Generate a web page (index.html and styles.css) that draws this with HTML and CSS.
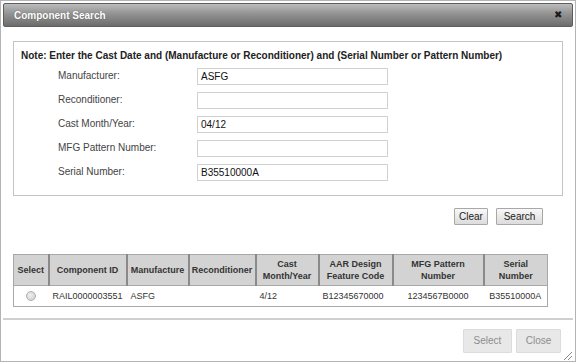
FILE: index.html
```html
<!DOCTYPE html>
<html>
<head>
<meta charset="utf-8">
<link rel="stylesheet" href="styles.css">
</head>
<body>
<div class="dialog">
  <div class="titlebar">
    <span class="title">Component Search</span>
    <span class="close">&#x2716;</span>
  </div>
  <div class="content">
    <div class="criteria">
      <div class="note">Note: Enter the Cast Date and (Manufacture or Reconditioner) and (Serial Number or Pattern Number)</div>
      <div class="form">
        <label class="lbl">Manufacturer:</label><div class="inp">ASFG</div>
        <label class="lbl">Reconditioner:</label><div class="inp"></div>
        <label class="lbl">Cast Month/Year:</label><div class="inp">04/12</div>
        <label class="lbl">MFG Pattern Number:</label><div class="inp"></div>
        <label class="lbl">Serial Number:</label><div class="inp">B35510000A</div>
      </div>
    </div>
    <div class="actions">
      <button class="btn btn-clear">Clear</button>
      <button class="btn btn-search">Search</button>
    </div>
    <table class="results">
      <colgroup>
        <col class="c1"><col class="c2"><col class="c3"><col class="c4"><col class="c5"><col class="c6"><col class="c7"><col class="c8">
      </colgroup>
      <thead>
        <tr>
          <th>Select</th>
          <th>Component ID</th>
          <th>Manufacture</th>
          <th>Reconditioner</th>
          <th>Cast<br>Month/Year</th>
          <th>AAR Design<br>Feature Code</th>
          <th>MFG Pattern<br>Number</th>
          <th>Serial<br>Number</th>
        </tr>
      </thead>
      <tbody>
        <tr>
          <td class="center"><span class="radio"></span></td>
          <td>RAIL0000003551</td>
          <td>ASFG</td>
          <td></td>
          <td>4/12</td>
          <td>B12345670000</td>
          <td class="center">1234567B0000</td>
          <td class="center">B35510000A</td>
        </tr>
      </tbody>
    </table>
  </div>
  <div class="footer">
    <button class="fbtn fbtn-select">Select</button>
    <button class="fbtn fbtn-close">Close</button>
    <span class="grip"></span>
  </div>
</div>
</body>
</html>
```
FILE: styles.css
```css
html, body {
  margin: 0;
  padding: 0;
  background: #fff;
}
body {
  font-family: Arial, "Liberation Sans", sans-serif;
  font-size: 10px;
  color: #333;
}
.dialog {
  width: 576px;
  height: 362px;
  box-sizing: border-box;
  border: 1px solid #b4b4b4;
  padding: 2px 2px 0 2px;
  display: flex;
  flex-direction: column;
  position: relative;
}
.titlebar {
  height: 24px;
  box-sizing: border-box;
  border: 1px solid #5e5e5e;
  border-radius: 2px;
  background: linear-gradient(#bcbcbc 0%, #929292 45%, #6c6c6c 100%);
  display: flex;
  align-items: center;
  justify-content: space-between;
  padding: 0 10px 0 10px;
}
.title {
  color: #fff;
  font-weight: bold;
  font-size: 10px;
  text-shadow: 0 0 1px #555;
}
.close {
  color: #1a1a1a;
  font-size: 10px;
  line-height: 1;
  margin-right: 0;
}
.content {
  padding: 14px 10px 0 10px;
  flex: 1;
}
.criteria {
  border: 1px solid #c4c4c4;
  height: 155px;
  box-sizing: border-box;
  padding: 8px 0 0 7px;
}
.note {
  font-weight: bold;
  color: #222;
  font-size: 10px;
  line-height: 12px;
  white-space: nowrap;
}
.form {
  display: grid;
  grid-template-columns: 139px 191px;
  grid-auto-rows: 17px;
  row-gap: 7px;
  padding-left: 37px;
  margin-top: 6px;
}
.lbl {
  color: #444;
  font-size: 10px;
  line-height: 15px;
}
.inp {
  border: 1px solid #d2d2d2;
  box-sizing: border-box;
  height: 17px;
  padding: 0 3px;
  font-size: 10px;
  line-height: 16px;
  color: #111;
}
.actions {
  display: flex;
  justify-content: flex-end;
  gap: 8px;
  margin: 12px 20px 0 0;
}
.btn {
  font-family: Arial, "Liberation Sans", sans-serif;
  font-size: 10px;
  color: #222;
  height: 17px;
  border: 1px solid #a8a8a8;
  border-radius: 1px;
  background: linear-gradient(#f8f8f8, #dcdcdc);
  line-height: 15px;
  padding: 0;
}
.btn-clear { width: 34px; }
.btn-search { width: 47px; }
.results {
  margin-top: 29px;
  border-collapse: collapse;
  table-layout: fixed;
  width: 534px;
  border: 1px solid #a8a8a8;
  font-size: 9px;
}
.c1 { width: 35px; }
.c2 { width: 78px; }
.c3 { width: 62px; }
.c4 { width: 67px; }
.c5 { width: 63px; }
.c6 { width: 74px; }
.c7 { width: 91px; }
.c8 { width: 64px; }
.results th {
  background: #d3d3d3;
  color: #333;
  font-weight: bold;
  height: 30px;
  padding: 0;
  border-left: 2px solid #8a8a8a;
  border-bottom: 1px solid #a8a8a8;
  line-height: 12px;
  text-align: center;
  white-space: nowrap;
}
.results th:first-child {
  border-left: none;
}
.results td {
  height: 20px;
  padding: 0 0 0 4px;
  color: #333;
  white-space: nowrap;
}
.results td.center {
  text-align: center;
  padding: 0;
}
.radio {
  display: inline-block;
  width: 8px;
  height: 8px;
  border-radius: 50%;
  border: 1px solid #b0b0b0;
  background: radial-gradient(circle at 40% 40%, #f0f0f0, #c8c8c8);
  vertical-align: middle;
}
.footer {
  margin-top: auto;
  border-top: 2px solid #d0d0d0;
  height: 43px;
  box-sizing: border-box;
  display: flex;
  justify-content: flex-end;
  align-items: center;
  gap: 4px;
  padding-right: 12px;
  position: relative;
}
.fbtn {
  font-family: Arial, "Liberation Sans", sans-serif;
  font-size: 10px;
  color: #8c8c8c;
  height: 24px;
  padding: 0;
  border: 1px solid #dcdcdc;
  background: #e8e8e8;
  border-radius: 1px;
}
.fbtn-select { width: 49px; }
.fbtn-close { width: 45px; }
.grip {
  position: absolute;
  right: 1px;
  bottom: 1px;
  width: 8px;
  height: 8px;
  background: linear-gradient(135deg, transparent 45%, #888 45%, #888 55%, transparent 55%, transparent 70%, #888 70%, #888 78%, transparent 78%);
}
```
